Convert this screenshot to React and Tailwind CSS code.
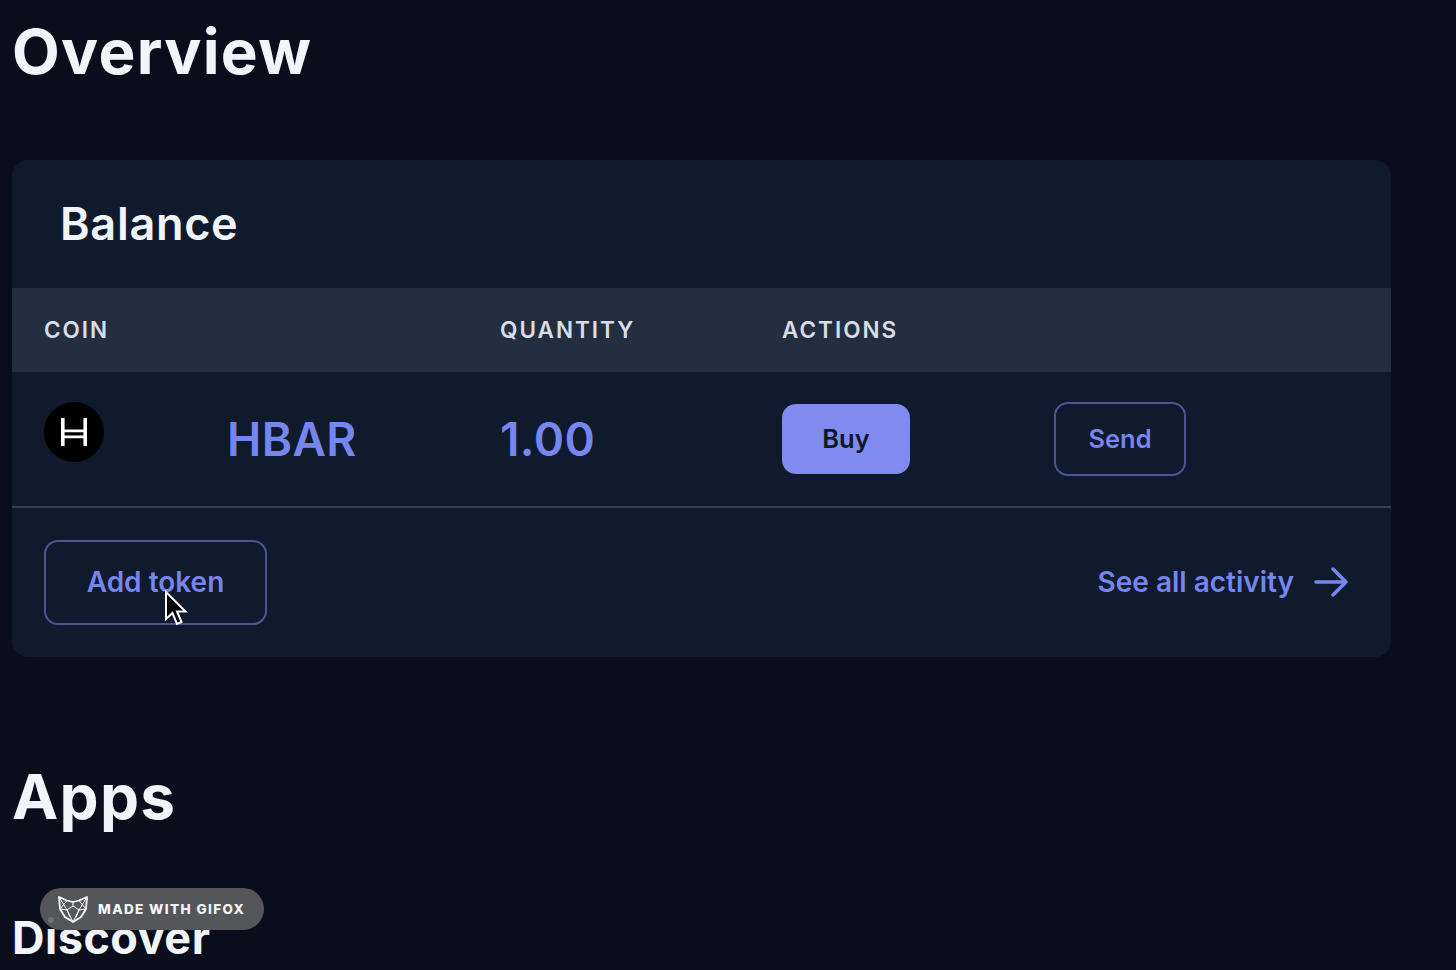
import React from "react";

function HbarLogo() {
  return (
    <svg width="60" height="60" viewBox="0 0 60 60" className="block">
      <circle cx="30" cy="30" r="30" fill="#000" />
      <path d="M18.800 16v28M41.200 16v28" stroke="#fff" strokeWidth="3.600" fill="none" />
      <path d="M18.800 28.800h22.400M18.800 34.800h22.400" stroke="#fff" strokeWidth="2.800" fill="none" />
    </svg>
  );
}

function Fox() {
  return (
    <svg width="32" height="30" viewBox="0 0 32 30" fill="none" stroke="#fff" strokeWidth="1.800" strokeLinejoin="round">
      <path d="M2 3l8 3.500 6 1.500 6-1.500 8-3.500-1 12-5 8-8 5-8-5-5-8z" />
      <path d="M2 3l8 13 6 12 6-12 8-13M10 6.500l-7 8.500 7 1 6-4 6 4 7-1-7-8.500M16 8v4M10 16l3 7M22 16l-3 7" strokeWidth="1" />
    </svg>
  );
}

function Cursor() {
  return (
    <svg width="26" height="38" viewBox="0 0 26 38" className="absolute left-[163px] top-[590px]">
      <path d="M3 2v27l6.500-6 4.500 11 4.500-2-4.500-10.500h8.500z" fill="#000" stroke="#fff" strokeWidth="2" strokeLinejoin="miter" />
    </svg>
  );
}

export default function App() {
  return (
    <div className="relative h-[970px] w-[1456px] overflow-hidden bg-[#0a0d1c] pl-3 font-['Inter',sans-serif] text-[#f1f5f9]">
      <h1 className="mt-[16px] text-[62px] font-bold leading-[72px] tracking-[1.300px]">Overview</h1>
      <section className="mt-[72px] w-[1379px] overflow-hidden rounded-2xl bg-[#0f1a2c]">
        <h2 className="flex h-[128px] items-center pl-[48px] text-[45px] font-semibold tracking-[0.700px]">Balance</h2>
        <div className="grid h-[84px] grid-cols-[456px_282px_1fr] items-center bg-[#232f40] text-[22.500px] font-semibold tracking-[2px] text-[#d9dee6]">
          <div className="pl-8">COIN</div>
          <div className="pl-8">QUANTITY</div>
          <div className="pl-8">ACTIONS</div>
        </div>
        <div className="grid h-[136px] grid-cols-[183px_273px_282px_272px_1fr] items-center border-b-2 border-[#334155] text-[#7785ee]">
          <div className="-mt-[14px] pl-8"><HbarLogo /></div>
          <div className="pl-8 text-[46px] font-semibold tracking-[0.400px]">HBAR</div>
          <div className="pl-8 text-[46px] font-semibold tracking-[0.400px]">1.00</div>
          <div className="pl-8">
            <button className="h-[70px] w-[128px] rounded-[14px] bg-[#7f8bef] text-[25.500px] font-semibold text-[#0f172a]">Buy</button>
          </div>
          <div className="pl-8">
            <button className="h-[74px] w-[132px] rounded-[14px] border-2 border-[#4b5694] text-[25.500px] font-semibold">Send</button>
          </div>
        </div>
        <div className="flex h-[149px] items-center justify-between pl-8 pr-[43px] text-[#7785ee]">
          <button className="h-[85px] w-[223px] rounded-[14px] border-2 border-[#4b5694] pb-[2px] text-[28px] font-semibold">Add token</button>
          <div className="-mt-[2px] flex items-center gap-[20px] text-[28px] font-semibold">
            <span>See all activity</span>
            <svg width="34" height="30" viewBox="0 0 34 30" fill="none" stroke="currentColor" strokeWidth="3.500" strokeLinecap="round" strokeLinejoin="round">
              <path d="M2 15h30M19 2l13 13-13 13" />
            </svg>
          </div>
        </div>
      </section>
      <h2 className="mt-[104px] text-[62px] font-bold leading-[72px] tracking-[1.300px]">Apps</h2>
      <h2 className="mt-[77px] text-[45px] font-bold leading-[56px] tracking-[0.500px]">Discover</h2>
      <Cursor />
      <div className="absolute left-[40px] top-[888px] flex h-[42px] w-[224px] items-center gap-[9px] rounded-full bg-[#555659] pl-[17px] text-[13.500px] font-extrabold tracking-[1.400px] text-[#f4f4f4]">
        <Fox />
        <span>MADE WITH GIFOX</span>
        <span className="absolute left-[8px] top-[29px] size-[6px] rounded-full bg-[#707176]" />
      </div>
    </div>
  );
}
